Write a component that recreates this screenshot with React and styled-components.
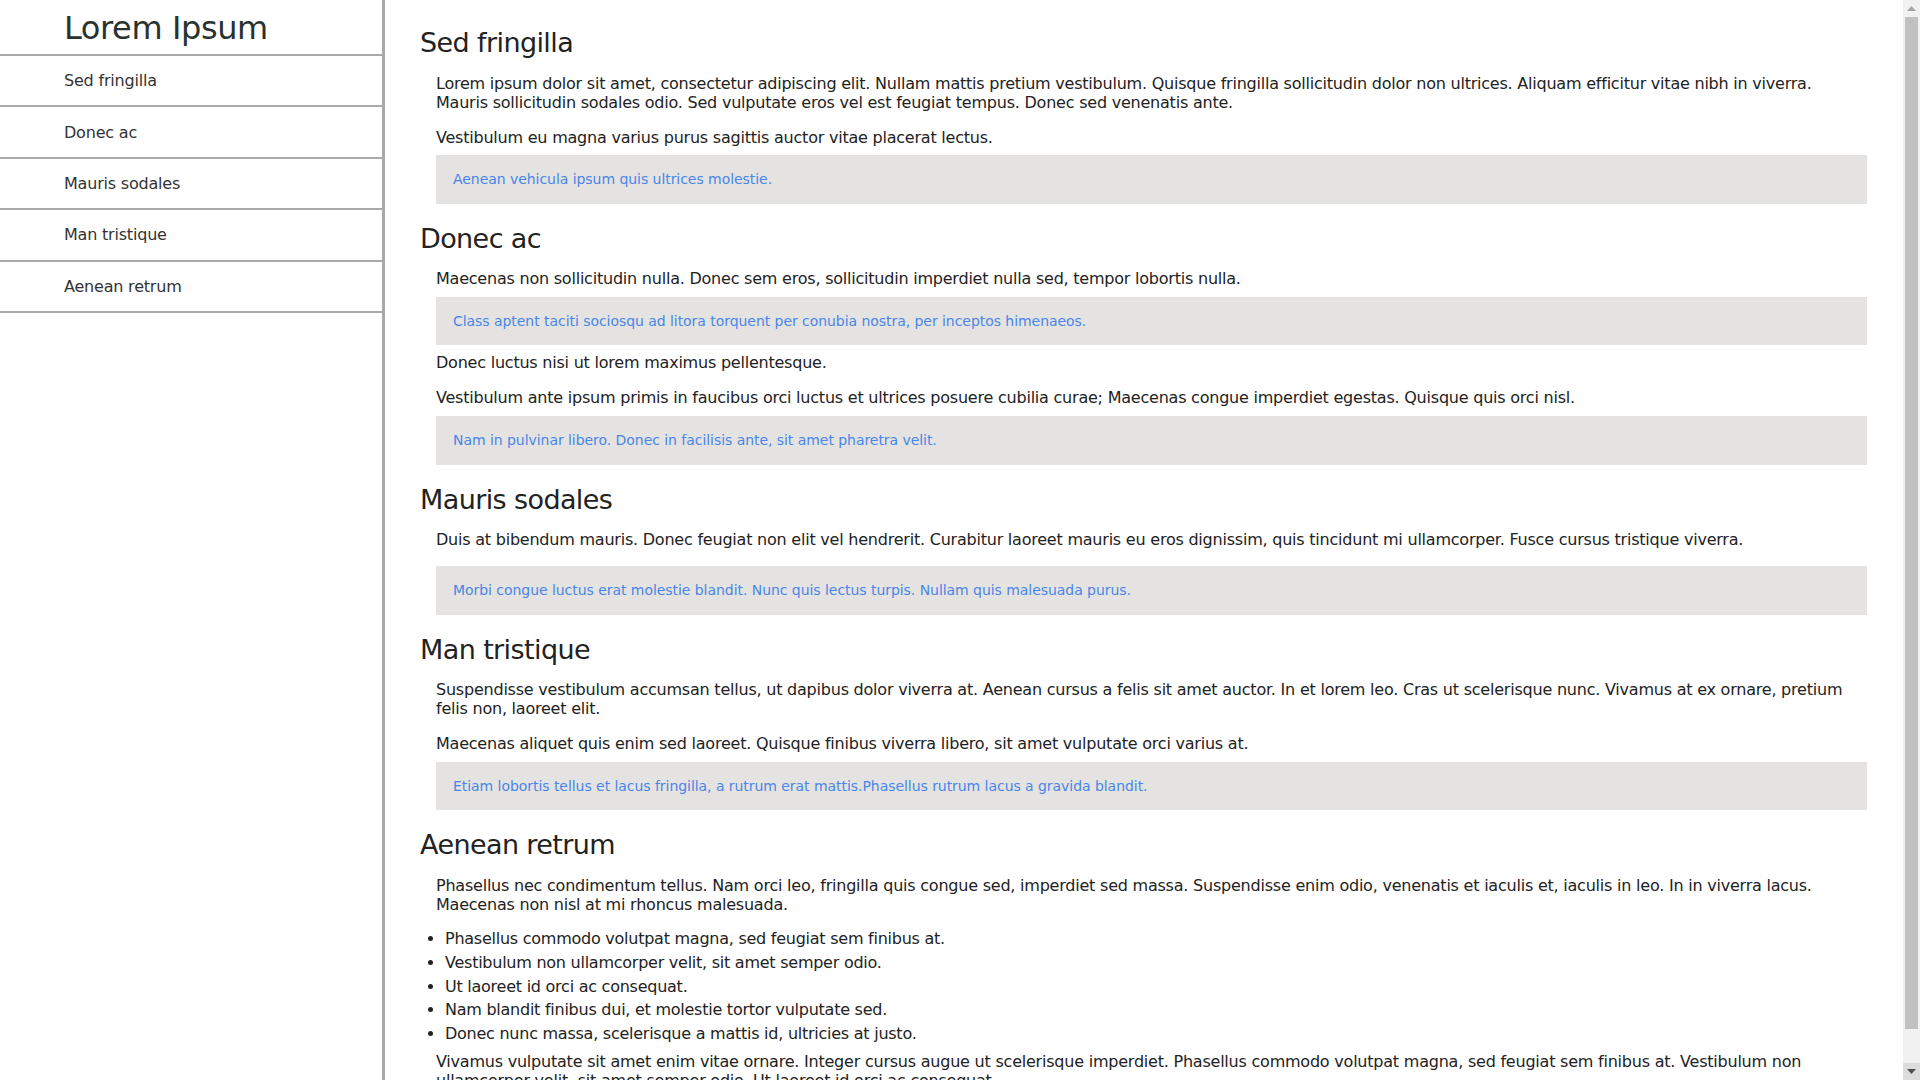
import React from 'react'
import styled, { createGlobalStyle } from 'styled-components'

const GlobalStyle = createGlobalStyle`
   html, body {
      margin: 0;
      padding: 0;
      height: 100%;
   }
   body {
      font-family: 'DejaVu Sans', 'Liberation Sans', sans-serif;
      color: #222;
      background: #fff;
   }
`

const Layout = styled.div`
   display: flex;
   height: 100vh;
   overflow: hidden;
`

const Sidebar = styled.aside`
   width: 382px;
   flex-shrink: 0;
   border-right: 3px solid #a9a9a9;
   background: #fff;
`

const Brand = styled.h1`
   margin: 0;
   padding: 8.5px 0 7.5px 64px;
   font-size: 32px;
   font-weight: normal;
   letter-spacing: -0.4px;
   color: #283230;
   border-bottom: 2px solid #a9a9a9;
`

const NavList = styled.ul`
   list-style: none;
   margin: 0;
   padding: 0;
`

const NavItem = styled.li`
   padding: 15.2px 0 15.2px 64px;
   font-size: 16px;
   line-height: 19px;
   letter-spacing: -0.2px;
   color: #333;
   border-bottom: 2px solid #a9a9a9;
`

const Main = styled.main`
   flex: 1;
   min-width: 0;
   overflow: hidden;
   padding: 27px 36px 40px 35px;
`

const Section = styled.section`
   & + & {
      margin-top: 19px;
   }

   h2 {
      margin: 0 0 15.5px;
      font-size: 27px;
      font-weight: normal;
      letter-spacing: -0.6px;
      color: #222;
   }

   p {
      margin: 16px 0 0 16px;
      font-size: 16px;
      line-height: 19px;
      letter-spacing: -0.22px;
   }

   h2 + p {
      margin-top: 0;
   }

   ul + p {
      margin-top: 6px;
   }
`

const Quote = styled.blockquote`
   margin: ${(p) => (p.$spaced ? '16.8px' : '8.5px')} 0 0 16px;
   padding: 16px 17px 16.4px;
   background: #e4e3e2;
   color: #4a86e8;
   font-size: 14px;
   line-height: 16.3px;
   letter-spacing: -0.05px;

   & + p {
      margin-top: 8px !important;
   }
`

const Bullets = styled.ul`
   margin: 13.5px 0 0;
   padding-left: 25px;

   li {
      font-size: 16px;
      line-height: 23.7px;
      letter-spacing: -0.25px;
   }
`

const ScrollTrack = styled.div`
   width: 17px;
   flex-shrink: 0;
   display: flex;
   flex-direction: column;
   background: #f1f1f1;
`

const ScrollButton = styled.div`
   height: 17px;
   display: flex;
   align-items: center;
   justify-content: center;
   background: ${(p) => (p.$active ? '#dcdcdc' : '#f1f1f1')};
`

const Thumb = styled.div`
   height: 1012px;
   margin: 0 2px;
   background: #c1c1c1;
`

const Spacer = styled.div`
   flex: 1;
`

const Arrow = ({ down, color }) => (
   <svg width='9' height='5' viewBox='0 0 9 5'>
      <path d={down ? 'M0 0h9L4.5 5z' : 'M0 5h9L4.5 0z'} fill={color} />
   </svg>
)

const nav = ['Sed fringilla', 'Donec ac', 'Mauris sodales', 'Man tristique', 'Aenean retrum']

const App = () => {
   return (
      <>
         <GlobalStyle />
         <Layout>
            <Sidebar>
               <Brand>Lorem Ipsum</Brand>
               <NavList>
                  {nav.map((n) => (
                     <NavItem key={n}>{n}</NavItem>
                  ))}
               </NavList>
            </Sidebar>
            <Main>
               <Section>
                  <h2>Sed fringilla</h2>
                  <p>
                     Lorem ipsum dolor sit amet, consectetur adipiscing elit. Nullam mattis pretium
                     vestibulum. Quisque fringilla sollicitudin dolor non ultrices. Aliquam efficitur
                     vitae nibh in viverra. Mauris sollicitudin sodales odio. Sed vulputate eros vel
                     est feugiat tempus. Donec sed venenatis ante.
                  </p>
                  <p>Vestibulum eu magna varius purus sagittis auctor vitae placerat lectus.</p>
                  <Quote>Aenean vehicula ipsum quis ultrices molestie.</Quote>
               </Section>
               <Section>
                  <h2>Donec ac</h2>
                  <p>
                     Maecenas non sollicitudin nulla. Donec sem eros, sollicitudin imperdiet nulla
                     sed, tempor lobortis nulla.
                  </p>
                  <Quote>
                     Class aptent taciti sociosqu ad litora torquent per conubia nostra, per inceptos
                     himenaeos.
                  </Quote>
                  <p>Donec luctus nisi ut lorem maximus pellentesque.</p>
                  <p>
                     Vestibulum ante ipsum primis in faucibus orci luctus et ultrices posuere cubilia
                     curae; Maecenas congue imperdiet egestas. Quisque quis orci nisl.
                  </p>
                  <Quote>Nam in pulvinar libero. Donec in facilisis ante, sit amet pharetra velit.</Quote>
               </Section>
               <Section>
                  <h2>Mauris sodales</h2>
                  <p>
                     Duis at bibendum mauris. Donec feugiat non elit vel hendrerit. Curabitur laoreet
                     mauris eu eros dignissim, quis tincidunt mi ullamcorper. Fusce cursus tristique
                     viverra.
                  </p>
                  <Quote $spaced>
                     Morbi congue luctus erat molestie blandit. Nunc quis lectus turpis. Nullam quis
                     malesuada purus.
                  </Quote>
               </Section>
               <Section>
                  <h2>Man tristique</h2>
                  <p>
                     Suspendisse vestibulum accumsan tellus, ut dapibus dolor viverra at. Aenean cursus
                     a felis sit amet auctor. In et lorem leo. Cras ut scelerisque nunc. Vivamus at ex
                     ornare, pretium felis non, laoreet elit.
                  </p>
                  <p>
                     Maecenas aliquet quis enim sed laoreet. Quisque finibus viverra libero, sit amet
                     vulputate orci varius at.
                  </p>
                  <Quote>
                     Etiam lobortis tellus et lacus fringilla, a rutrum erat mattis.Phasellus rutrum
                     lacus a gravida blandit.
                  </Quote>
               </Section>
               <Section>
                  <h2>Aenean retrum</h2>
                  <p>
                     Phasellus nec condimentum tellus. Nam orci leo, fringilla quis congue sed,
                     imperdiet sed massa. Suspendisse enim odio, venenatis et iaculis et, iaculis in
                     leo. In in viverra lacus. Maecenas non nisl at mi rhoncus malesuada.
                  </p>
                  <Bullets>
                     <li>Phasellus commodo volutpat magna, sed feugiat sem finibus at.</li>
                     <li>Vestibulum non ullamcorper velit, sit amet semper odio.</li>
                     <li>Ut laoreet id orci ac consequat.</li>
                     <li>Nam blandit finibus dui, et molestie tortor vulputate sed.</li>
                     <li>Donec nunc massa, scelerisque a mattis id, ultricies at justo.</li>
                  </Bullets>
                  <p>
                     Vivamus vulputate sit amet enim vitae ornare. Integer cursus augue ut scelerisque
                     imperdiet. Phasellus commodo volutpat magna, sed feugiat sem finibus at.
                     Vestibulum non ullamcorper velit, sit amet semper odio. Ut laoreet id orci ac
                     consequat.
                  </p>
               </Section>
            </Main>
            <ScrollTrack>
               <ScrollButton>
                  <Arrow color='#a3a3a3' />
               </ScrollButton>
               <Thumb />
               <Spacer />
               <ScrollButton $active>
                  <Arrow down color='#505050' />
               </ScrollButton>
            </ScrollTrack>
         </Layout>
      </>
   )
}

export default App
